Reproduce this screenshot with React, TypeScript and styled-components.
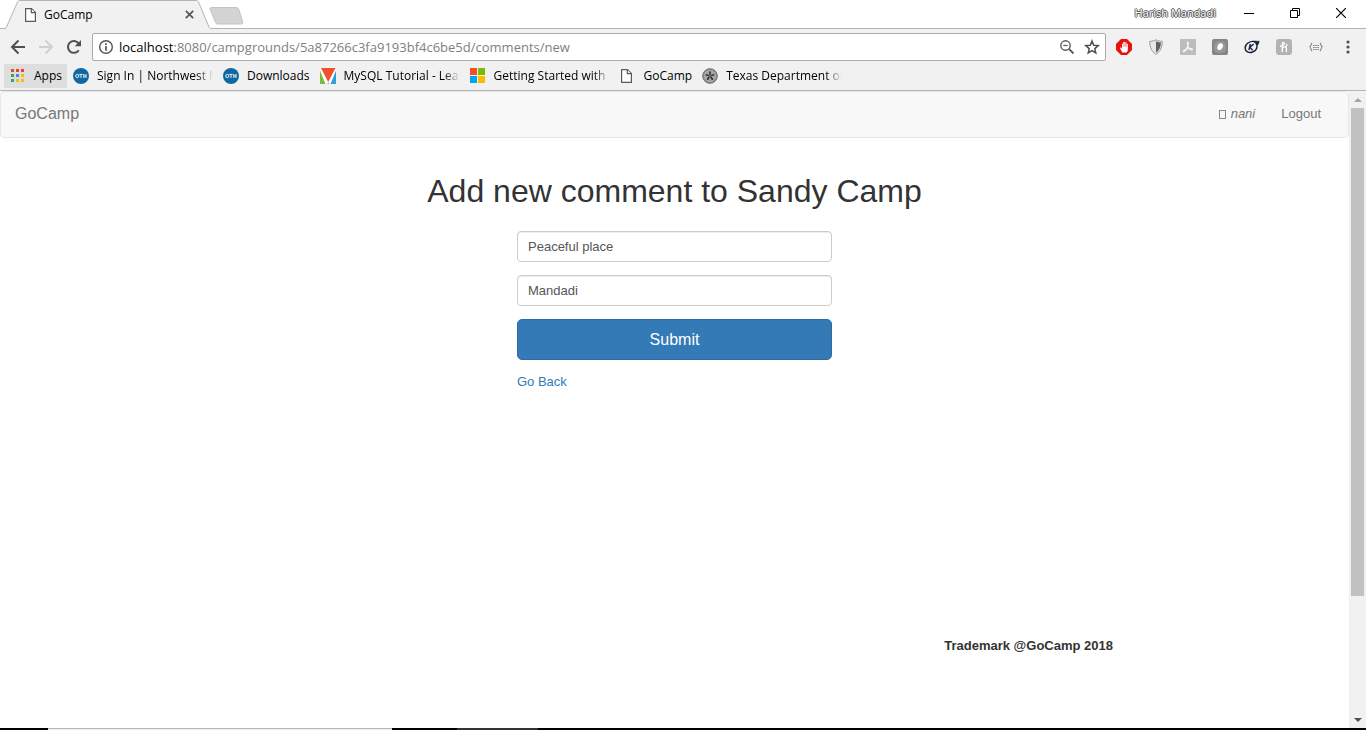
import React from "react";
import styled, { createGlobalStyle, css } from "styled-components";

const GlobalStyle = createGlobalStyle`
  *, *::before, *::after { box-sizing: border-box; }
  body { margin: 0; background: #fff; }
  button, input { font-family: inherit; margin: 0; }
`;

const uiFont = `"Open Sans", "Noto Sans", sans-serif`;
const pageFont = `"Liberation Sans", Arial, sans-serif`;

const Window = styled.div`
  display: flex;
  flex-direction: column;
  min-height: 100vh;
  font-family: ${uiFont};
  font-size: 12px;
  color: #000;
`;

const TitleBar = styled.header`
  display: flex;
  height: 29px;
  border-bottom: 1px solid #b4b4b4;
`;

const Tab = styled.div`
  position: relative;
  display: flex;
  align-items: center;
  gap: 4px;
  width: 248px;
  height: 29px;
  padding: 0 52px 0 24px;
  & > * { position: relative; }
`;

const TabShape = styled.svg`
  && { position: absolute; }
  top: 0;
  left: 0;
`;

const TabTitle = styled.span`
  flex: 1;
  line-height: 16px;
`;

const IconButton = styled.button<{ $w?: number }>`
  display: flex;
  align-items: center;
  justify-content: center;
  width: ${(p) => p.$w ?? 28}px;
  height: 28px;
  padding: 0;
  border: 0;
  background: none;
  flex: none;
`;

const WindowControls = styled.div`
  display: flex;
  margin-left: auto;
  padding: 0 2px 2px 0;
  align-items: center;
`;

const Profile = styled.span`
  margin-right: 10px;
  font-size: 11px;
  line-height: 16px;
  color: #fff;
  text-shadow: 1px 0 #555, -1px 0 #555, 0 1px #555, 0 -1px #555;
`;

const Toolbar = styled.div`
  display: flex;
  align-items: center;
  height: 36px;
  padding: 0 2px 0 4px;
  background: #f1f1f1;
`;

const AddressBar = styled.div`
  display: flex;
  flex: 1;
  align-items: center;
  height: 28px;
  margin: 0 2px 0 4px;
  padding: 0 1px 0 5px;
  border: 1px solid #aaa;
  border-radius: 2px;
  background: #fff;
`;

const Url = styled.span`
  flex: 1;
  padding: 0 0 1px 5px;
  font-size: 13px;
  line-height: 20px;
  color: #808080;
  b { font-weight: 400; color: #000; }
`;

const AddressButton = styled(IconButton)`
  width: 25px;
  height: 24px;
`;

const Bookmarks = styled.nav`
  display: flex;
  align-items: center;
  gap: 10px;
  height: 26px;
  padding: 0 4px 3px;
  border-bottom: 1px solid #b4b4b4;
  background: #f1f1f1;
`;

const AppsLink = styled.a`
  display: flex;
  align-items: center;
  gap: 9px;
  width: 63px;
  height: 24px;
  padding-left: 6px;
  margin-right: -4px;
  background: #dedede;
  color: #000;
  text-decoration: none;
  line-height: 16px;
`;

const Bookmark = styled.a`
  display: flex;
  align-items: center;
  gap: 8px;
  height: 24px;
  color: #000;
  text-decoration: none;
`;

const BookmarkLabel = styled.span<{ $fade?: boolean }>`
  line-height: 16px;
  white-space: nowrap;
  overflow: hidden;
  ${(p) =>
    p.$fade &&
    css`
      width: 116px;
      mask-image: linear-gradient(to right, #000 86%, transparent);
    `}
`;

const Viewport = styled.div`
  display: flex;
  flex: 1;
`;

const Page = styled.div`
  display: flex;
  flex: 1;
  flex-direction: column;
  font-family: ${pageFont};
  font-size: 13px;
  line-height: 18px;
  color: #333;
`;

const Navbar = styled.nav`
  display: flex;
  align-items: center;
  height: 47px;
  padding: 0 27px 1px 14px;
  border: 1px solid #e7e7e7;
  border-radius: 4px;
  background: #f8f8f8;
`;

const Brand = styled.a`
  margin-right: auto;
  font-size: 16px;
  line-height: 22px;
  color: #777;
  text-decoration: none;
`;

const NavLink = styled.a`
  display: flex;
  align-items: center;
  gap: 5px;
  margin-left: 26px;
  color: #777;
  text-decoration: none;
`;

const MissingGlyph = styled.span`
  width: 7px;
  height: 9px;
  border: 1px solid #888;
`;

const Main = styled.main`
  display: flex;
  flex: 1;
  flex-direction: column;
  align-items: center;
  padding-top: 35px;
`;

const Heading = styled.h1`
  margin: 0 0 22px;
  font-size: 32px;
  line-height: 36px;
  font-weight: 400;
  text-align: center;
`;

const Form = styled.form`
  display: flex;
  flex-direction: column;
  gap: 13px;
  width: 315px;
`;

const Field = styled.input`
  width: 100%;
  height: 31px;
  padding: 0 10px;
  border: 1px solid #ccc;
  border-radius: 4px;
  background: #fff;
  box-shadow: inset 0 1px 1px rgba(0, 0, 0, 0.075);
  font-size: 13px;
  color: #555;
`;

const Submit = styled.button`
  height: 41px;
  border: 1px solid #2e6da4;
  border-radius: 5px;
  background: #337ab7;
  color: #fff;
  font-size: 16px;
`;

const BackLink = styled.a`
  align-self: flex-start;
  color: #337ab7;
  text-decoration: none;
`;

const Footer = styled.footer`
  width: 100%;
  max-width: 1053px;
  margin: 0 auto;
  padding: 0 88px 73px 0;
  text-align: right;
  font-weight: 700;
`;

const Scrollbar = styled.div`
  display: flex;
  flex-direction: column;
  width: 17px;
  padding: 0 2px;
  background: #f1f1f1;
`;

const Thumb = styled.div`
  flex: 81;
  background: #c1c1c1;
`;

const TrackRest = styled.div`
  flex: 19;
`;

const ScrollArrow = styled(IconButton)`
  width: 13px;
  height: 17px;
`;

const TaskbarEdge = styled.div`
  display: flex;
  height: 2px;
  background: #000;
`;

const EdgePart = styled.div<{ $w: number; $kind: "gap" | "light" | "dim" }>`
  width: ${(p) => p.$w}px;
  ${(p) => p.$kind === "light" && css`background: #f0f0f0; border-top: 1px solid #b8b8b8;`}
  ${(p) => p.$kind === "dim" && css`background: #333;`}
`;

const FileIcon = () => (
  <svg width="16" height="16" viewBox="0 0 16 16" fill="#fff" stroke="#5a5a5a" strokeWidth="1.2">
    <path d="M1.6 1.6h5.9l3.9 3.9v8.9H1.6z" />
    <path d="M7.3 1.8v3.9h3.9" />
  </svg>
);

const OthIcon = () => (
  <svg width="16" height="16" viewBox="0 0 16 16" aria-hidden="true">
    <circle cx="8" cy="8" r="8" fill="#1168a0" />
    <path d="M6.300 6.400h3.400M8 6.400V10M10.800 6v4M13 6v4M10.800 8H13" fill="none" stroke="#fff" strokeWidth=".9" />
    <circle cx="4.300" cy="8" r="1.600" fill="none" stroke="#fff" strokeWidth=".9" />
  </svg>
);

const AppsIcon = () => {
  const colors = ["#ea4335", "#ea4335", "#ea4335", "#34a853", "#4285f4", "#fbbc05", "#34a853", "#fbbc05", "#fbbc05"];
  return (
    <svg width="15" height="14" viewBox="0 0 15 14">
      {colors.map((c, i) => (
        <rect key={i} x={1 + (i % 3) * 5} y={Math.floor(i / 3) * 5} width="3" height="3" fill={c} />
      ))}
    </svg>
  );
};

const TriangleIcon = () => (
  <svg width="16" height="16" viewBox="0 0 16 16">
    <path d="M0 0h16v16H0z" fill="#fff" />
    <path d="M0 2.500 5.500 16H0z" fill="#7bbb42" />
    <path d="M16 2.500 10.500 16H16z" fill="#2f9fd9" />
    <path d="M1 0h14.500L8.200 14z" fill="#f0502a" />
    <path d="M8.200 14.500 7.200 16h2z" fill="#2f9fd9" />
  </svg>
);

const SquaresIcon = () => (
  <svg width="16" height="16" viewBox="0 0 16 16">
    <path fill="#f25022" d="M0 0h7v7H0z" />
    <path fill="#7fba00" d="M8 0h7v7H8z" />
    <path fill="#00a4ef" d="M0 8h7v7H0z" />
    <path fill="#ffb900" d="M8 8h7v7H8z" />
  </svg>
);

const SealIcon = () => (
  <svg width="16" height="16" viewBox="0 0 16 16">
    <circle cx="8" cy="8" r="7.300" fill="#8c8c8c" stroke="#6e6e6e" />
    <circle cx="8" cy="8" r="5.600" fill="#a4a4a4" stroke="#c4c4c4" strokeWidth="1" strokeDasharray="1 1" />
    <path d="M8 3.500v3.300M12.300 6.600 9.200 7.600M10.700 11.700 8.800 9M5.300 11.700 7.200 9M3.700 6.600l3.100 1" stroke="#2a2a2a" strokeWidth="1.500" />
    <circle cx="8" cy="8" r="1" fill="#555" />
  </svg>
);

const BackIcon = ({ color = "#505050", flip = false }: { color?: string; flip?: boolean }) => (
  <svg width="16" height="16" viewBox="0 0 16 16" fill="none" stroke={color} strokeWidth="2">
    <path d={flip ? "M1 8h12.500M7.500 1.500 14 8l-6.500 6.500" : "M15 8H2.500M8.500 1.500 2 8l6.500 6.500"} />
  </svg>
);

const ReloadIcon = () => (
  <svg width="16" height="16" viewBox="0 0 16 16">
    <path d="M12.800 11.200A5.900 5.900 0 1 1 12.700 4.500" fill="none" stroke="#505050" strokeWidth="2" />
    <path d="M15 1v6.300H8.700z" fill="#505050" />
  </svg>
);

const InfoIcon = () => (
  <svg width="16" height="16" viewBox="0 0 16 16">
    <circle cx="8" cy="8" r="6.300" fill="none" stroke="#555" strokeWidth="1.400" />
    <path d="M8 4.200v1.700M8 7.100v4.700" stroke="#555" strokeWidth="1.700" />
  </svg>
);

const ZoomOutIcon = () => (
  <svg width="16" height="16" viewBox="0 0 16 16" fill="none" stroke="#5a5a5a">
    <circle cx="6.500" cy="6.500" r="4.700" strokeWidth="1.400" />
    <path d="M4.300 6.500h4.400" strokeWidth="1.200" />
    <path d="m10 10 4.500 4.500" strokeWidth="1.800" />
  </svg>
);

const StarIcon = () => (
  <svg width="16" height="16" viewBox="0 0 16 16" fill="none" stroke="#505050" strokeWidth="1.500">
    <path d="m8 2 1.700 4.200 4.500.4-3.400 3 1 4.400L8 11.700 4.200 14l1-4.400-3.400-3 4.500-.4z" />
  </svg>
);

const HandIcon = () => (
  <svg width="16" height="16" viewBox="0 0 16 16">
    <path d="M5 0h6l5 5v6l-5 5H5l-5-5V5z" fill="#e8110f" />
    <path d="M6.300 13.500 4 9.300c-.4-.8.5-1.200 1.100-.6l.9 1V5c0-.8 1.100-.8 1.100 0V3.600c0-.8 1.200-.8 1.200 0v-.3c0-.8 1.200-.8 1.200 0V4c0-.8 1.200-.8 1.200 0v1.300c0-.8 1.200-.8 1.200 0V10c0 1.800-.6 2.800-1.400 3.500z" fill="#fff" />
    <path d="M7.100 4.500v3.300M8.300 3.600v4M9.500 3.800v3.800M10.700 4.800v3" stroke="#e8110f" strokeWidth=".4" />
  </svg>
);

const ShieldIcon = () => (
  <svg width="16" height="16" viewBox="0 0 16 16">
    <path d="M8 .8c2 1.200 4 1.500 6.300 1.600C14.200 8 12.500 12.500 8 15.300 3.500 12.500 1.800 8 1.700 2.400 4 2.300 6 2 8 .8z" fill="#e7e7e7" stroke="#999" />
    <path d="M8 2.300c1.500.8 3.200 1.200 5 1.300C12.700 8 11.300 11.500 8 13.800z" fill="#606060" />
  </svg>
);

const PdfIcon = () => (
  <svg width="16" height="16" viewBox="0 0 16 16">
    <path d="M0 0h16v16H0z" fill="#bdbdbd" />
    <path d="M7.500 3c1-.2.900 1.500.5 3.300C7.200 9.200 4.900 12.800 3.600 12.700c-1.300-.4 1.500-2.500 5-3 3-.4 4.400.5 3.700 1-1 .7-4-1.500-4.700-4.700C7.300 4.600 7.200 3.300 7.500 3z" fill="none" stroke="#f8f8f8" strokeWidth="1.100" />
  </svg>
);

const DotIcon = () => (
  <svg width="16" height="16" viewBox="0 0 16 16">
    <rect width="16" height="16" rx="2" fill="#868686" />
    <rect x="2" y="2" width="12" height="12" rx="5" fill="#989898" />
    <path d="M7.600 4.500c1.800-.8 3.800.2 3.500 2.200-.4 2.700-2.700 5-4.600 4.300-2.100-1-1.200-5.500 1.100-6.500z" fill="#fff" />
  </svg>
);

const KeyIcon = () => (
  <svg width="16" height="16" viewBox="0 0 16 16" fill="none" stroke="#17213f">
    <path d="M11.500 2.700C6 1.300 1.200 4.800 1.100 9c0 3.700 3.900 5.400 7.500 4 3-1.300 4.700-3.700 4.400-6.500" strokeWidth="1.400" />
    <path d="M9 2.200h6.200c-.3 2.200-1.200 3.800-2.500 4.900-.4-2.100-1.600-3.800-3.700-4.900z" fill="#17213f" strokeWidth=".5" />
    <path d="M6.300 4.900 4.900 11.200M9.700 5 5.900 8.100l2.700 3.100" strokeWidth="1.400" />
  </svg>
);

const HoneyIcon = () => (
  <svg width="16" height="16" viewBox="0 0 16 16" fill="none" stroke="#fff">
    <rect width="16" height="16" rx="3" fill="#b2b2b2" stroke="none" />
    <path d="M6.300 13V4.800c0-1.900 2-1.800 1.900-.2C8 6 6 7 4 7.300" strokeWidth="1.300" />
    <path d="M6.400 9.500c.8-1.900 4.100-2.500 4.100.3 0 1.500-1 2.700.5 3.200M9.200 7.800c1.400-.3 2.200-2.200 1-2.600" strokeWidth="1.300" />
  </svg>
);

const BracesIcon = () => (
  <svg width="16" height="16" viewBox="0 0 16 16" fill="none" stroke="#858585">
    <path d="M4.200 4C2.500 4 3.700 7.500 1.500 8c2.200.5 1 4 2.700 4M11.800 4c1.700 0 .5 3.500 2.700 4-2.200.5-1 4-2.700 4" strokeWidth="1.200" />
    <path d="M5 6.500h6M5 8.500h6M5 10.500h6" strokeDasharray="1.600 .6" />
  </svg>
);

const MenuIcon = () => (
  <svg width="4" height="16" viewBox="0 0 4 16" fill="#505050">
    <circle cx="2" cy="3" r="1.600" />
    <circle cx="2" cy="8" r="1.600" />
    <circle cx="2" cy="13" r="1.600" />
  </svg>
);

const extensions = [
  { label: "Ad blocker", icon: <HandIcon /> },
  { label: "Shield", icon: <ShieldIcon /> },
  { label: "PDF", icon: <PdfIcon /> },
  { label: "Recorder", icon: <DotIcon /> },
  { label: "Keywords", icon: <KeyIcon /> },
  { label: "Coupons", icon: <HoneyIcon /> },
  { label: "JSON viewer", icon: <BracesIcon /> },
];

const bookmarks = [
  { label: "Sign In | Northwest M", icon: <OthIcon />, fade: true },
  { label: "Downloads", icon: <OthIcon /> },
  { label: "MySQL Tutorial - Lear", icon: <TriangleIcon />, fade: true },
  { label: "Getting Started with C", icon: <SquaresIcon />, fade: true },
  { label: "GoCamp", icon: <FileIcon /> },
  { label: "Texas Department of", icon: <SealIcon />, fade: true },
];

export default function App() {
  return (
    <Window>
      <GlobalStyle />
      <TitleBar>
        <Tab>
          <TabShape width="248" height="29" viewBox="0 0 248 29">
            <path d="M0 28.500h4.500c1 0 1.500-.5 2-1.500L17.500 2c.5-1 1-1.500 2-1.500h177c1 0 1.500.5 2 1.500L209 27c.5 1 1 1.500 2 1.500h37" fill="#f1f1f1" stroke="#b4b4b4" />
            <path d="M6 28h204v1H6z" fill="#f1f1f1" />
            <path d="M211 7.500h25.500c1 0 1.500.3 2 1l4.300 13.500c.4 1-.2 2-1.300 2H218c-1.500 0-2-.5-2.500-1.500l-5.300-13c-.5-1 0-2 .8-2z" fill="#d3d3d3" stroke="#c4c4c4" />
          </TabShape>
          <FileIcon />
          <TabTitle>GoCamp</TabTitle>
          <IconButton $w={14} aria-label="Close tab">
            <svg width="9" height="9" viewBox="0 0 9 9" stroke="#555" strokeWidth="1.700">
              <path d="m.8.8 7.400 7.400M8.200.8.8 8.200" />
            </svg>
          </IconButton>
        </Tab>
        <WindowControls>
          <Profile>Harish Mandadi</Profile>
          <IconButton $w={46} aria-label="Minimize">
            <svg width="10" height="10" stroke="#000"><path d="M0 5.500h10" /></svg>
          </IconButton>
          <IconButton $w={46} aria-label="Restore">
            <svg width="10" height="10" fill="none" stroke="#000"><path d="M.5 2.500h7v7h-7zM2.500 2.500v-2h7v7h-2" /></svg>
          </IconButton>
          <IconButton $w={46} aria-label="Close window">
            <svg width="10" height="10" stroke="#000" strokeWidth="1.200"><path d="m0 0 10 10M10 0 0 10" /></svg>
          </IconButton>
        </WindowControls>
      </TitleBar>
      <Toolbar>
        <IconButton aria-label="Back"><BackIcon /></IconButton>
        <IconButton aria-label="Forward"><BackIcon color="#d0d0d0" flip /></IconButton>
        <IconButton aria-label="Reload"><ReloadIcon /></IconButton>
        <AddressBar>
          <InfoIcon />
          <Url><b>localhost</b>:8080/campgrounds/5a87266c3fa9193bf4c6be5d/comments/new</Url>
          <AddressButton aria-label="Zoom"><ZoomOutIcon /></AddressButton>
          <AddressButton aria-label="Bookmark this page"><StarIcon /></AddressButton>
        </AddressBar>
        {extensions.map((e) => (
          <IconButton key={e.label} $w={32} aria-label={e.label}>{e.icon}</IconButton>
        ))}
        <IconButton $w={32} aria-label="Menu"><MenuIcon /></IconButton>
      </Toolbar>
      <Bookmarks>
        <AppsLink href="#apps"><AppsIcon />Apps</AppsLink>
        {bookmarks.map((b, i) => (
          <Bookmark key={i} href="#bookmark">
            {b.icon}
            <BookmarkLabel $fade={b.fade}>{b.label}</BookmarkLabel>
          </Bookmark>
        ))}
      </Bookmarks>
      <Viewport>
        <Page>
          <Navbar>
            <Brand href="#home">GoCamp</Brand>
            <NavLink href="#user"><MissingGlyph /><em>nani</em></NavLink>
            <NavLink href="#logout">Logout</NavLink>
          </Navbar>
          <Main>
            <Heading>Add new comment to Sandy Camp</Heading>
            <Form onSubmit={(e) => e.preventDefault()}>
              <Field aria-label="Comment" defaultValue="Peaceful place" />
              <Field aria-label="Author" defaultValue="Mandadi" />
              <Submit type="submit">Submit</Submit>
              <BackLink href="#back">Go Back</BackLink>
            </Form>
          </Main>
          <Footer>Trademark @GoCamp 2018</Footer>
        </Page>
        <Scrollbar>
          <ScrollArrow aria-label="Scroll up">
            <svg width="8" height="4"><path d="M0 4h8L4 0z" fill="#a3a3a3" /></svg>
          </ScrollArrow>
          <Thumb />
          <TrackRest />
          <ScrollArrow aria-label="Scroll down">
            <svg width="8" height="4"><path d="M0 0h8L4 4z" fill="#505050" /></svg>
          </ScrollArrow>
        </Scrollbar>
      </Viewport>
      <TaskbarEdge>
        <EdgePart $w={48} $kind="gap" />
        <EdgePart $w={344} $kind="light" />
        <EdgePart $w={65} $kind="gap" />
        <EdgePart $w={81} $kind="dim" />
      </TaskbarEdge>
    </Window>
  );
}
